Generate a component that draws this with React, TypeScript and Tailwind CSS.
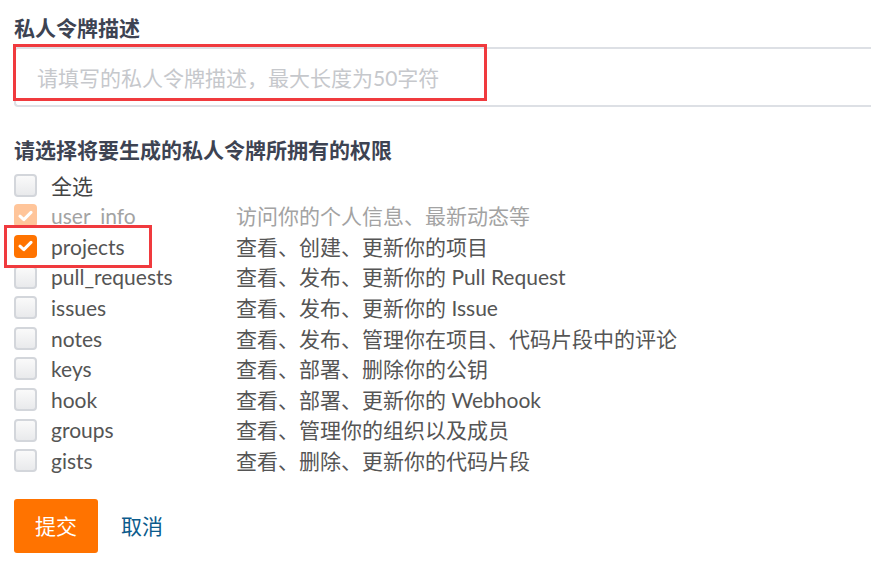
import React from "react";

const font = "font-['Lato','Noto_Sans_CJK_SC',sans-serif]";

const perms = [
  { key: "user_info", desc: "访问你的个人信息、最新动态等", checked: true, disabled: true },
  { key: "projects", desc: "查看、创建、更新你的项目", checked: true },
  { key: "pull_requests", desc: "查看、发布、更新你的 Pull Request" },
  { key: "issues", desc: "查看、发布、更新你的 Issue" },
  { key: "notes", desc: "查看、发布、管理你在项目、代码片段中的评论" },
  { key: "keys", desc: "查看、部署、删除你的公钥" },
  { key: "hook", desc: "查看、部署、更新你的 Webhook" },
  { key: "groups", desc: "查看、管理你的组织以及成员" },
  { key: "gists", desc: "查看、删除、更新你的代码片段" },
];

function Box({ checked, disabled }: { checked?: boolean; disabled?: boolean }) {
  if (checked) {
    return (
      <span
        className={`flex h-[23px] w-[23px] shrink-0 items-center justify-center rounded-[4px] ${
          disabled ? "bg-[#ffc59a]" : "bg-[#ff7300]"
        }`}
      >
        <svg width="15" height="12" viewBox="0 0 15 12">
          <path d="M2 6.2 L5.8 9.6 L13 2.4" fill="none" stroke="#fff" strokeWidth="3" strokeLinecap="round" strokeLinejoin="round" />
        </svg>
      </span>
    );
  }
  return (
    <span className="block h-[23px] w-[23px] shrink-0 rounded-[4px] border-2 border-[#d3d6db] bg-gradient-to-b from-[#fafafa] to-[#e9eaec]" />
  );
}

export default function App() {
  return (
    <div className={`relative h-[570px] w-[871px] overflow-hidden bg-white ${font}`}>
      <div className="flex flex-col pl-[14px]">
        <h2 className="mt-[13px] text-[21px] font-bold leading-[30px] text-[#3d4352]">私人令牌描述</h2>

        <input
          className="mt-[4px] h-[60px] w-full rounded-l-[4px] border-2 border-r-0 border-[#dde0e5] pl-[21px] text-[21px] text-[#555] outline-none placeholder:text-[#c6c8cc]"
          placeholder="请填写的私人令牌描述，最大长度为50字符"
        />

        <h2 className="mt-[28px] text-[21px] font-bold leading-[30px] text-[#3d4352]">
          请选择将要生成的私人令牌所拥有的权限
        </h2>

        <div className="mt-[5px] flex flex-col">
          <label className="flex h-[30.6px] items-center text-[21px] text-[#444]">
            <Box />
            <span className="ml-[14px]">全选</span>
          </label>
          {perms.map((p) => (
            <label
              key={p.key}
              className={`flex h-[30.6px] items-center text-[21px] ${p.disabled ? "text-[#a3a3a3]" : "text-[#555]"}`}
            >
              <Box checked={p.checked} disabled={p.disabled} />
              <span className="ml-[14px] w-[185px]">{p.key}</span>
              <span>{p.desc}</span>
            </label>
          ))}
        </div>

        <div className="mt-[23px] flex items-center">
          <button className="h-[54px] w-[84px] rounded-[3px] bg-[#ff7300] text-[21px] text-white">提交</button>
          <a className="ml-[23px] text-[21px] text-[#0b5b8c]">取消</a>
        </div>
      </div>

      {/* annotation boxes */}
      <div className="absolute left-[13px] top-[44px] h-[57px] w-[474px] border-[3px] border-[#f03a3e]" />
      <div className="absolute left-[4px] top-[225px] h-[43px] w-[148px] border-[3px] border-[#f03a3e]" />
    </div>
  );
}
